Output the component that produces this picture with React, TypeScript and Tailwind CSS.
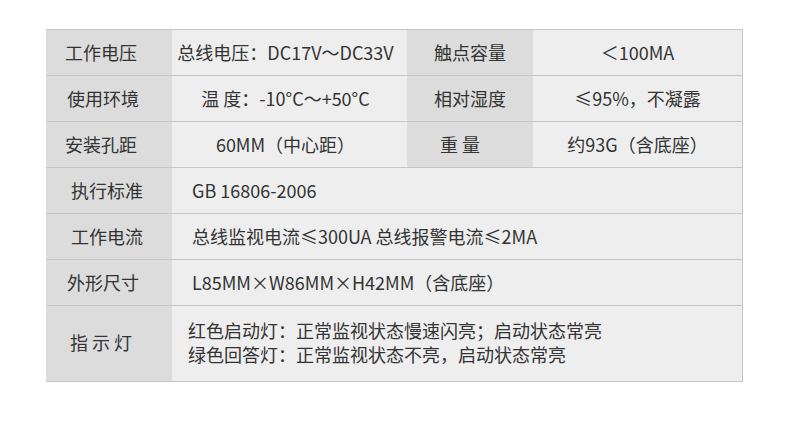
import React from 'react';

const font = { fontFamily: '"Noto Sans CJK SC", "Noto Sans", sans-serif' };

type Row = {
  label: string;
  labelCls?: string;
  value: React.ReactNode;
  label2?: string;
  label2Cls?: string;
  value2?: string;
};

const rows: Row[] = [
  { label: '工作电压', labelCls: 'pr-4', value: '总线电压：DC17V～DC33V', label2: '触点容量', value2: '＜100MA' },
  { label: '使用环境', labelCls: 'pr-3', value: '温 度：-10°C～+50°C', label2: '相对湿度', value2: '≤95%，不凝露' },
  { label: '安装孔距', labelCls: 'pr-4', value: '60MM（中心距）', label2: '重 量', label2Cls: 'pr-5', value2: '约93G（含底座）' },
  { label: '执行标准', labelCls: 'pr-1', value: 'GB 16806-2006' },
  { label: '工作电流', labelCls: 'pr-1', value: '总线监视电流≤300UA 总线报警电流≤2MA' },
  { label: '外形尺寸', labelCls: 'pr-3', value: 'L85MM×W86MM×H42MM（含底座）' },
];

export default function App() {
  return (
    <div className="w-[790px] h-[426px] bg-white pt-[29px] pl-[46px] text-[#333333] text-[18px]" style={font}>
      <div className="w-[697px] border-t border-r border-[#c6c6c6]">
        {rows.map((r, i) =>
          r.label2 ? (
            <div key={i} className="grid grid-cols-[126px_235px_126px_1fr] h-[46px] border-b border-[#c6c6c6]">
              <div className={`bg-[#dcdcdc] flex items-center justify-center ${r.labelCls ?? ''}`}>{r.label}</div>
              <div className="bg-[#eeeeee] flex items-center justify-center pr-2">{r.value}</div>
              <div className={`bg-[#dcdcdc] flex items-center justify-center ${r.label2Cls ?? ''}`}>{r.label2}</div>
              <div className="bg-[#eeeeee] flex items-center justify-center">{r.value2}</div>
            </div>
          ) : (
            <div key={i} className="grid grid-cols-[126px_1fr] h-[46px] border-b border-[#c6c6c6]">
              <div className={`bg-[#dcdcdc] flex items-center justify-center ${r.labelCls ?? ''}`}>{r.label}</div>
              <div className="bg-[#eeeeee] flex items-center pl-5">{r.value}</div>
            </div>
          )
        )}
        {/* indicator row, two lines */}
        <div className="grid grid-cols-[126px_1fr] h-[76px] border-b border-[#c6c6c6]">
          <div className="bg-[#dcdcdc] flex items-center justify-center pr-4 pb-[3px]">指 示 灯</div>
          <div className="bg-[#eeeeee] flex flex-col justify-center pl-4 pb-[3px] leading-[24px]">
            <div>红色启动灯：正常监视状态慢速闪亮；启动状态常亮</div>
            <div>绿色回答灯：正常监视状态不亮，启动状态常亮</div>
          </div>
        </div>
      </div>
    </div>
  );
}
